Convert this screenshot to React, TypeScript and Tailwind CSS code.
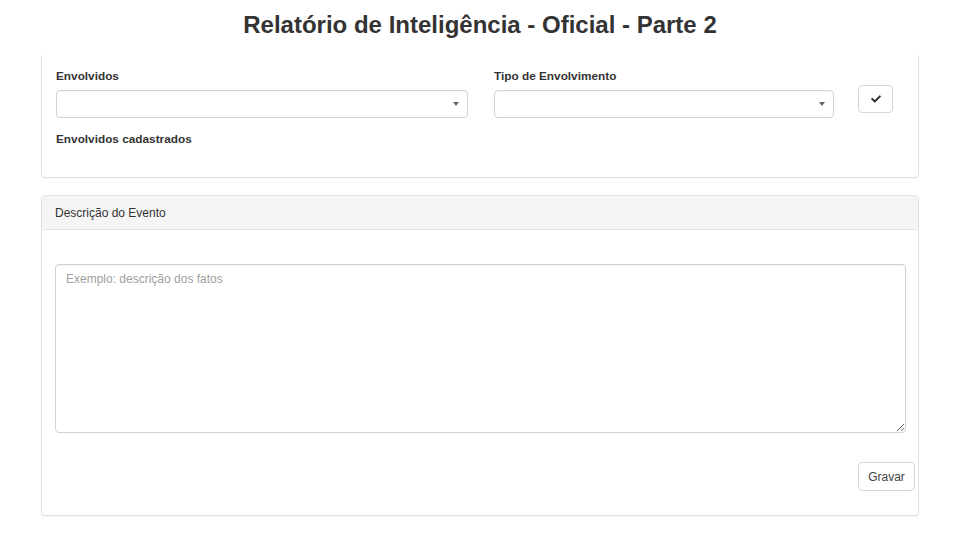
import React from "react";
import { FaCheck } from "react-icons/fa";

function Caret() {
  return (
    <svg width="6" height="4" viewBox="0 0 6 4" className="block">
      <path d="M0 0 L6 0 L3 4 Z" fill="#666" />
    </svg>
  );
}

function FakeSelect({ width }: { width: string }) {
  return (
    <div
      className={`${width} h-[28px] border border-[#d2d2d2] rounded-[4px] bg-white flex items-center justify-end pr-[8px] shadow-[inset_0_1px_1px_rgba(0,0,0,0.04)]`}
    >
      <Caret />
    </div>
  );
}

export default function App() {
  return (
    <div
      className="w-[960px] h-[540px] bg-white text-[#333] overflow-hidden"
      style={{ fontFamily: '"Liberation Sans", Arial, sans-serif' }}
    >
      <div className="h-[50px] flex items-center justify-center">
        <h1 className="text-[24px] font-bold leading-none text-[#333]">
          Relatório de Inteligência - Oficial - Parte 2
        </h1>
      </div>

      <div className="ml-[41px] w-[878px] mt-[5px] border border-t-0 border-[#e1e1e1] rounded-b-[4px] px-[14px] pt-[13px] pb-[29px] shadow-[0_1px_1px_rgba(0,0,0,0.04)]">
        <div className="flex items-start">
          <div className="flex flex-col">
            <label className="text-[11.8px] font-bold leading-[17px]">Envolvidos</label>
            <div className="mt-[5px]">
              <FakeSelect width="w-[412px]" />
            </div>
          </div>
          <div className="flex flex-col ml-[26px]">
            <label className="text-[11.8px] font-bold leading-[17px]">
              Tipo de Envolvimento
            </label>
            <div className="mt-[5px]">
              <FakeSelect width="w-[340px]" />
            </div>
          </div>
          <button className="ml-[24px] mt-[17px] w-[35px] h-[28px] border border-[#d6d6d6] rounded-[4px] bg-white flex items-center justify-center">
            <FaCheck size={10} color="#333" />
          </button>
        </div>
        <div className="mt-[13px] text-[11.8px] font-bold leading-[17px]">
          Envolvidos cadastrados
        </div>
      </div>

      <div className="ml-[41px] w-[878px] mt-[17px] border border-[#e1e1e1] rounded-[4px] shadow-[0_1px_1px_rgba(0,0,0,0.04)]">
        <div className="bg-[#f5f5f5] border-b border-[#e6e6e6] rounded-t-[4px] h-[34px] px-[13px] flex items-center">
          <span className="text-[12px] leading-[17px] text-[#333] pt-[2px]">
            Descrição do Evento
          </span>
        </div>
        <div className="pl-[13px] pr-[12px] pt-[34px] pb-[24px]">
          <textarea
            placeholder="Exemplo: descrição dos fatos"
            className="block w-full h-[169px] border border-[#d2d2d2] rounded-[4px] px-[10px] py-[6px] text-[12px] leading-[17px] placeholder:text-[#a0a0a0] outline-none shadow-[inset_0_1px_1px_rgba(0,0,0,0.05)]"
            style={{ fontFamily: '"Liberation Sans", Arial, sans-serif' }}
          />
          <div className="flex justify-end mt-[29px] -mr-[9px]">
            <button className="w-[57px] h-[29px] border border-[#d6d6d6] rounded-[4px] bg-white text-[12px] text-[#444]">
              Gravar
            </button>
          </div>
        </div>
      </div>
    </div>
  );
}
